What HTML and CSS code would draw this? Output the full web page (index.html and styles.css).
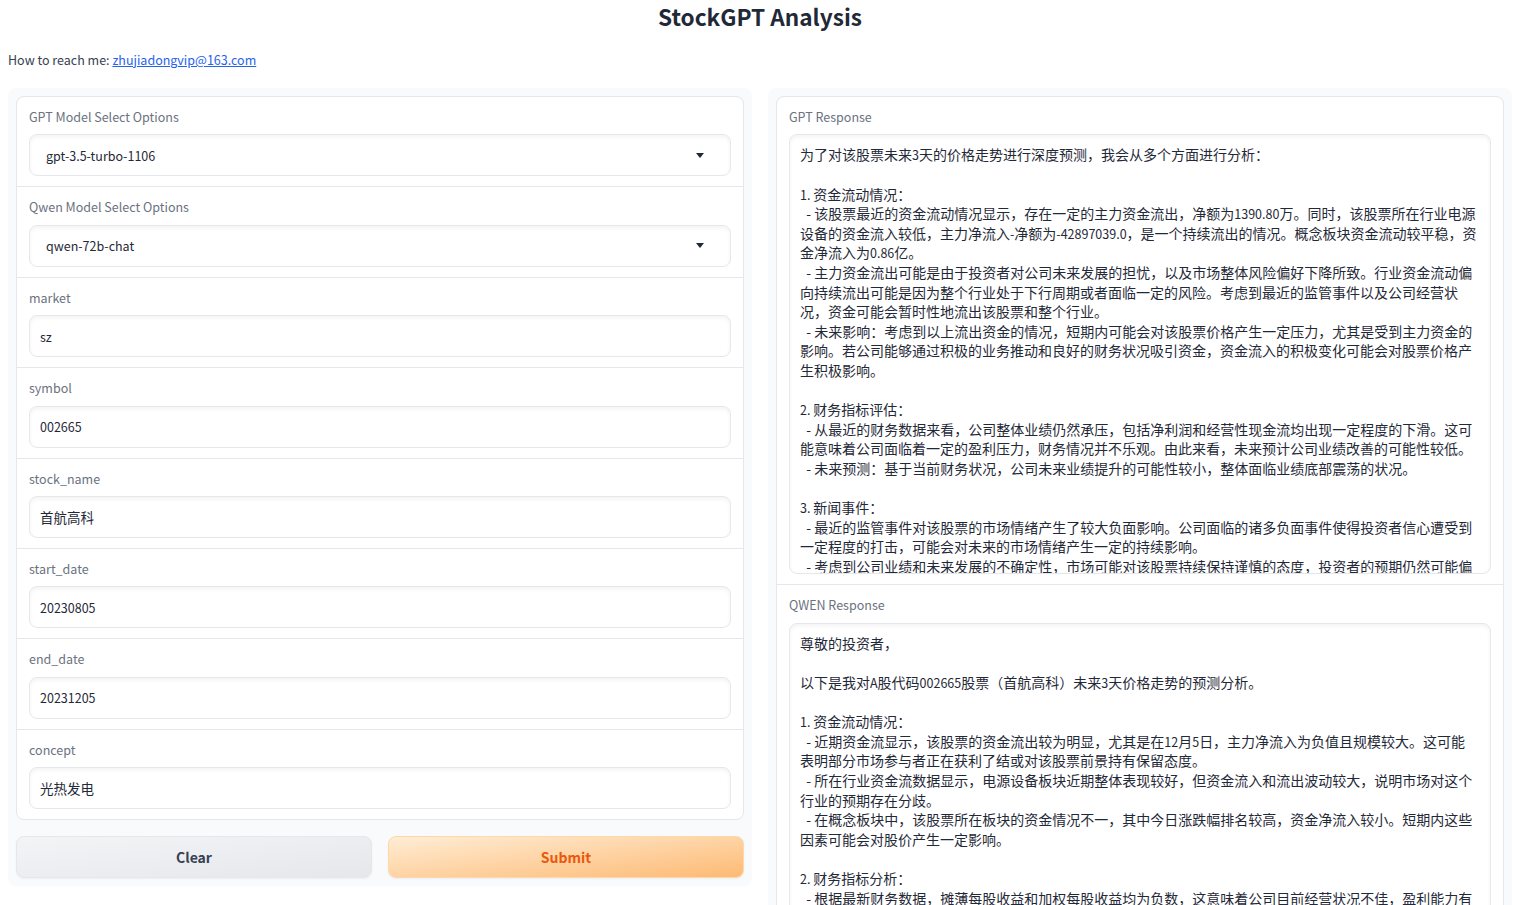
FILE: index.html
```html
<!DOCTYPE html>
<html lang="zh">
<head>
<meta charset="utf-8">
<title>StockGPT Analysis</title>
<link rel="stylesheet" href="styles.css">
</head>
<body>
<div class="app">
  <h1 class="title">StockGPT Analysis</h1>
  <p class="contact">How to reach me: <a href="#">zhujiadongvip@163.com</a></p>
  <div class="main">
    <div class="panel">
      <div class="form">
        <div class="block">
          <span class="label">GPT Model Select Options</span>
          <div class="input dropdown"><span>gpt-3.5-turbo-1106</span><svg class="caret" width="8" height="5" viewBox="0 0 8 5"><path d="M0 0H8L4 5Z" fill="#1f2937"/></svg></div>
        </div>
        <div class="block">
          <span class="label">Qwen Model Select Options</span>
          <div class="input dropdown"><span>qwen-72b-chat</span><svg class="caret" width="8" height="5" viewBox="0 0 8 5"><path d="M0 0H8L4 5Z" fill="#1f2937"/></svg></div>
        </div>
        <div class="block">
          <span class="label">market</span>
          <div class="input">sz</div>
        </div>
        <div class="block">
          <span class="label">symbol</span>
          <div class="input">002665</div>
        </div>
        <div class="block">
          <span class="label">stock_name</span>
          <div class="input cjk">首航高科</div>
        </div>
        <div class="block">
          <span class="label">start_date</span>
          <div class="input">20230805</div>
        </div>
        <div class="block">
          <span class="label">end_date</span>
          <div class="input">20231205</div>
        </div>
        <div class="block">
          <span class="label">concept</span>
          <div class="input cjk">光热发电</div>
        </div>
      </div>
      <div class="buttons">
        <button class="btn btn-secondary">Clear</button>
        <button class="btn btn-primary">Submit</button>
      </div>
    </div>
    <div class="panel">
      <div class="form">
        <div class="block">
          <span class="label">GPT Response</span>
          <div class="textarea">为了对该股票未来<span class="n">3</span>天的价格走势进行深度预测，我会从多个方面进行分析：

<span class="n">1. </span>资金流动情况：
<span class="b">  - </span>该股票最近的资金流动情况显示，存在一定的主力资金流出，净额为<span class="n">1390.80</span>万。同时，该股票所在行业电源设备的资金流入较低，主力净流入<span class="n">-</span>净额为<span class="n">-42897039.0</span>，是一个持续流出的情况。概念板块资金流动较平稳，资金净流入为<span class="n">0.86</span>亿。
<span class="b">  - </span>主力资金流出可能是由于投资者对公司未来发展的担忧，以及市场整体风险偏好下降所致。行业资金流动偏向持续流出可能是因为整个行业处于下行周期或者面临一定的风险。考虑到最近的监管事件以及公司经营状况，资金可能会暂时性地流出该股票和整个行业。
<span class="b">  - </span>未来影响：考虑到以上流出资金的情况，短期内可能会对该股票价格产生一定压力，尤其是受到主力资金的影响。若公司能够通过积极的业务推动和良好的财务状况吸引资金，资金流入的积极变化可能会对股票价格产生积极影响。

<span class="n">2. </span>财务指标评估：
<span class="b">  - </span>从最近的财务数据来看，公司整体业绩仍然承压，包括净利润和经营性现金流均出现一定程度的下滑。这可能意味着公司面临着一定的盈利压力，财务情况并不乐观。由此来看，未来预计公司业绩改善的可能性较低。
<span class="b">  - </span>未来预测：基于当前财务状况，公司未来业绩提升的可能性较小，整体面临业绩底部震荡的状况。

<span class="n">3. </span>新闻事件：
<span class="b">  - </span>最近的监管事件对该股票的市场情绪产生了较大负面影响。公司面临的诸多负面事件使得投资者信心遭受到一定程度的打击，可能会对未来的市场情绪产生一定的持续影响。
<span class="b">  - </span>考虑到公司业绩和未来发展的不确定性，市场可能对该股票持续保持谨慎的态度，投资者的预期仍然可能偏向谨慎。</div>
        </div>
        <div class="block">
          <span class="label">QWEN Response</span>
          <div class="textarea">尊敬的投资者，

以下是我对<span class="n">A</span>股代码<span class="n">002665</span>股票（首航高科）未来<span class="n">3</span>天价格走势的预测分析。

<span class="n">1. </span>资金流动情况：
<span class="b">  - </span>近期资金流显示，该股票的资金流出较为明显，尤其是在<span class="n">12</span>月<span class="n">5</span>日，主力净流入为负值且规模较大。这可能表明部分市场参与者正在获利了结或对该股票前景持有保留态度。
<span class="b">  - </span>所在行业资金流数据显示，电源设备板块近期整体表现较好，但资金流入和流出波动较大，说明市场对这个行业的预期存在分歧。
<span class="b">  - </span>在概念板块中，该股票所在板块的资金情况不一，其中今日涨跌幅排名较高，资金净流入较小。短期内这些因素可能会对股价产生一定影响。

<span class="n">2. </span>财务指标分析：
<span class="b">  - </span>根据最新财务数据，摊薄每股收益和加权每股收益均为负数，这意味着公司目前经营状况不佳，盈利能力有待提高。</div>
        </div>
      </div>
    </div>
  </div>
</div>
</body>
</html>
```
FILE: styles.css
```css
* { box-sizing: border-box; }
html, body {
  margin: 0;
  padding: 0;
  background: #ffffff;
  overflow: hidden;
}
body {
  width: 1536px;
  height: 905px;
  font-family: "Noto Sans CJK SC", "Noto Sans", sans-serif;
  color: #1f2937;
}
.app {
  width: 1504px;
  margin: 0 8px;
}
.title {
  margin: 0;
  font-size: 22.6px;
  line-height: 34px;
  font-weight: 600;
  text-align: center;
  color: #1f2937;
}
.contact {
  margin: 16px 0 0;
  font-size: 12.5px;
  line-height: 20px;
  color: #374151;
}
.contact a {
  color: #2563eb;
  text-decoration: underline;
}
.main {
  display: flex;
  gap: 16px;
  margin-top: 18px;
  align-items: flex-start;
}
.panel {
  flex: 1;
  min-width: 0;
  background: #f9fafb;
  border-radius: 8px;
  padding: 8px;
  display: flex;
  flex-direction: column;
  gap: 16px;
}
.form {
  border: 1px solid #e5e7eb;
  border-radius: 8px;
  background: #e5e7eb;
  display: flex;
  flex-direction: column;
  gap: 1px;
  overflow: hidden;
}
.block {
  background: #ffffff;
  padding: 10px 12px;
}
.label {
  display: block;
  font-size: 12.5px;
  line-height: 20px;
  color: #6b7280;
  margin-bottom: 7.4px;
}
.input {
  height: 42px;
  border: 1px solid #e5e7eb;
  border-radius: 8px;
  box-shadow: inset 0 2px 4px rgba(0, 0, 0, 0.05);
  background: #ffffff;
  padding: 0 10px;
  display: flex;
  align-items: center;
  font-size: 12.5px;
  color: #1f2937;
}
.input.cjk {
  font-size: 13.5px;
}
.dropdown {
  padding: 0 26px 0 16px;
  justify-content: space-between;
}
.caret {
  display: block;
}
.textarea {
  height: 440px;
  overflow: hidden;
  border: 1px solid #e5e7eb;
  border-radius: 8px;
  box-shadow: inset 0 2px 4px rgba(0, 0, 0, 0.05);
  background: #ffffff;
  padding: 10px 12px 10px 10px;
  white-space: pre-wrap;
  font-size: 14px;
  line-height: 19.6px;
  color: #1f2937;
}
.n {
  font-size: 12.5px;
}
.b {
  font-size: 14px;
}
.buttons {
  display: flex;
  gap: 16px;
}
.btn {
  flex: 1;
  height: 42px;
  border-radius: 8px;
  font-family: inherit;
  font-size: 14px;
  font-weight: 600;
  display: flex;
  align-items: center;
  justify-content: center;
  box-shadow: 0 1px 2px rgba(0, 0, 0, 0.05);
  cursor: pointer;
}
.btn-secondary {
  border: 1px solid #e5e7eb;
  background: linear-gradient(to bottom right, #f3f4f6, #e5e7eb);
  color: #374151;
}
.btn-primary {
  border: 1px solid #fed7aa;
  background: linear-gradient(to bottom right, #ffedd5, #fdba74);
  color: #ea580c;
}
```
